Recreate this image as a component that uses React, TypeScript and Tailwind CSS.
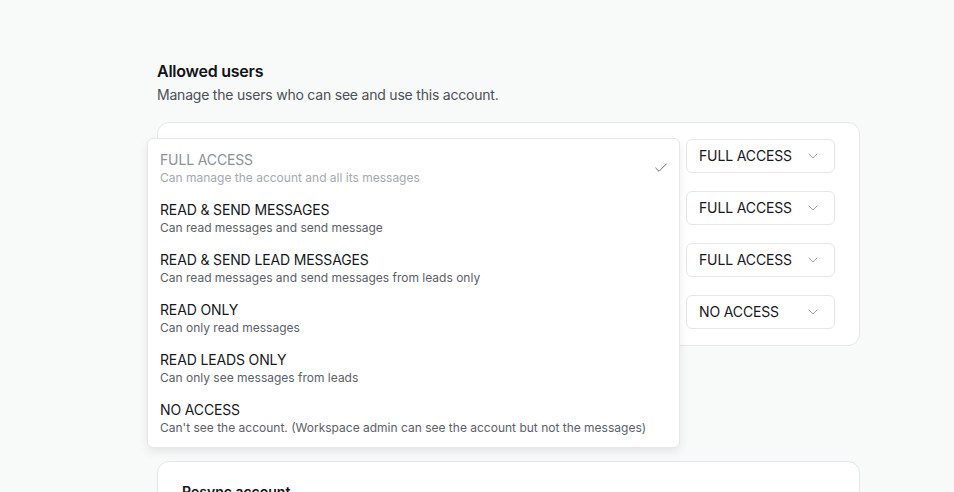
import { Check, ChevronDown } from 'lucide-react';

const options = [
  { title: 'FULL ACCESS', desc: 'Can manage the account and all its messages', selected: true },
  { title: 'READ & SEND MESSAGES', desc: 'Can read messages and send message' },
  { title: 'READ & SEND LEAD MESSAGES', desc: 'Can read messages and send messages from leads only' },
  { title: 'READ ONLY', desc: 'Can only read messages' },
  { title: 'READ LEADS ONLY', desc: 'Can only see messages from leads' },
  { title: 'NO ACCESS', desc: "Can't see the account. (Workspace admin can see the account but not the messages)" },
];

const users = ['FULL ACCESS', 'FULL ACCESS', 'FULL ACCESS', 'NO ACCESS'];

function AccessSelect({ value }: { value: string }) {
  return (
    <button className="flex h-[34px] w-[149px] items-center justify-between rounded-md border border-[#e4e6ea] bg-white pl-[12px] pr-[13px] text-sm tracking-[-0.01em] text-[#16181d]">
      <span>{value}</span>
      <ChevronDown className="h-4 w-4 text-[#8a8e95]" strokeWidth={1.25} />
    </button>
  );
}

export default function App() {
  return (
    <div
      className="h-[492px] w-full overflow-hidden bg-[#f8f9f9]"
      style={{ fontFamily: 'Inter, "Noto Sans", sans-serif' }}
    >
      <div className="ml-[157px] w-[703px] pt-[59px]">
        <h2 className="text-base leading-6 font-semibold tracking-[-0.015em] text-[#111318]">Allowed users</h2>
        <p className="mt-[2px] text-sm leading-5 tracking-[-0.015em] text-[#4b5058]">
          Manage the users who can see and use this account.
        </p>

        <div className="relative mt-[17px]">
          <div className="flex flex-col items-end gap-[18px] rounded-xl border border-[#e4e6ea] bg-white pt-[16px] pr-[24px] pb-[16px]">
            {users.map((u, i) => (
              <AccessSelect key={i} value={u} />
            ))}
          </div>

          {/* open dropdown menu */}
          <div className="absolute top-[16px] left-[-10px] z-10 w-[533px] rounded-md border border-[#e4e6ea] bg-white py-1 shadow-[0_4px_10px_rgba(0,0,0,0.08)]">
            {options.map((o) => (
              <div key={o.title} className="flex items-center justify-between py-[7px] pr-[10px] pl-[12px]">
                <div>
                  <div className={`text-sm leading-5 tracking-[-0.01em] ${o.selected ? 'text-[#8c9097]' : 'text-[#16181d]'}`}>
                    {o.title}
                  </div>
                  <div className={`text-xs leading-4 ${o.selected ? 'text-[#a5a9b0]' : 'text-[#5b6069]'}`}>{o.desc}</div>
                </div>
                {o.selected && <Check className="h-4 w-4 text-[#6b7079]" strokeWidth={1.5} />}
              </div>
            ))}
          </div>
        </div>

        <div className="mt-[115px] rounded-xl border border-[#e4e6ea] bg-white px-6 pt-[20px] pb-6">
          <h3 className="text-sm leading-5 font-semibold text-[#111318]">Resync account</h3>
        </div>
      </div>
    </div>
  );
}
